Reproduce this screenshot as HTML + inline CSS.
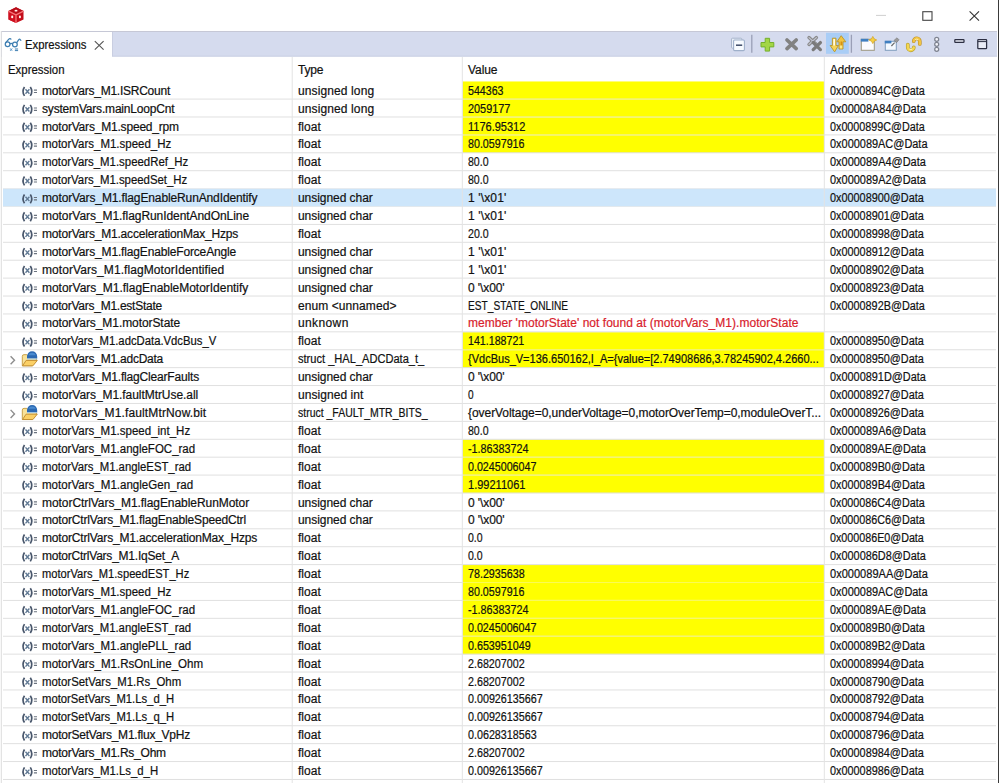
<!DOCTYPE html>
<html><head><meta charset="utf-8"><title>Expressions</title>
<style>
html,body{margin:0;padding:0;background:#fff;}
body{width:1000px;height:783px;position:relative;overflow:hidden;font-family:"Liberation Sans",sans-serif;font-size:12px;color:#111;}
.abs{position:absolute;}
.t{position:absolute;white-space:nowrap;line-height:18px;height:18px;-webkit-text-stroke:0.2px;transform-origin:0 0;}
.red{color:#d8222d;}
svg{position:absolute;left:0;top:0;overflow:visible;}
</style></head><body>

<svg width="1000" height="783" viewBox="0 0 1000 783">
<rect x="1" y="31" width="996" height="25.6" fill="#d5dbee"/>
<rect x="1" y="55.6" width="996" height="1" fill="#cbd1e3"/>
<rect x="1" y="31" width="996" height="1" fill="#c6c8d6"/>
<rect x="2" y="32" width="110.4" height="25" fill="#fff"/>
<rect x="112" y="32" width="1" height="24.6" fill="#c9cee1"/>
<rect x="826" y="32.8" width="22.8" height="21" fill="#a9cdf6"/>
<rect x="998" y="0" width="1" height="783" fill="#3a3a3a"/>
<rect x="0.8" y="31" width="1" height="752" fill="#dcdcdc"/>
<rect x="462.6" y="81.47" width="361.6" height="17.71" fill="#ffff00"/>
<rect x="462.6" y="99.38" width="361.6" height="17.71" fill="#ffff00"/>
<rect x="462.6" y="117.28" width="361.6" height="17.71" fill="#ffff00"/>
<rect x="462.6" y="135.19" width="361.6" height="17.71" fill="#ffff00"/>
<rect x="3" y="188.60" width="993" height="17.91" fill="#cde6fb"/>
<rect x="462.6" y="332.14" width="361.6" height="17.71" fill="#ffff00"/>
<rect x="462.6" y="350.05" width="361.6" height="17.71" fill="#ffff00"/>
<rect x="462.6" y="439.57" width="361.6" height="17.71" fill="#ffff00"/>
<rect x="462.6" y="457.48" width="361.6" height="17.71" fill="#ffff00"/>
<rect x="462.6" y="475.38" width="361.6" height="17.71" fill="#ffff00"/>
<rect x="462.6" y="564.90" width="361.6" height="17.71" fill="#ffff00"/>
<rect x="462.6" y="582.81" width="361.6" height="17.71" fill="#ffff00"/>
<rect x="462.6" y="600.71" width="361.6" height="17.71" fill="#ffff00"/>
<rect x="462.6" y="618.62" width="361.6" height="17.71" fill="#ffff00"/>
<rect x="462.6" y="636.52" width="361.6" height="17.71" fill="#ffff00"/>
<rect x="3" y="98.58" width="993" height="1" fill="#e0e0e0" fill-opacity="1"/>
<rect x="3" y="116.48" width="993" height="1" fill="#e0e0e0" fill-opacity="1"/>
<rect x="3" y="134.38" width="993" height="1" fill="#e0e0e0" fill-opacity="1"/>
<rect x="3" y="152.29" width="993" height="1" fill="#e0e0e0" fill-opacity="1"/>
<rect x="3" y="170.19" width="993" height="1" fill="#e0e0e0" fill-opacity="1"/>
<rect x="3" y="188.10" width="993" height="1" fill="#e0e0e0" fill-opacity="0.5"/>
<rect x="3" y="206.00" width="993" height="1" fill="#e0e0e0" fill-opacity="0.5"/>
<rect x="3" y="223.91" width="993" height="1" fill="#e0e0e0" fill-opacity="1"/>
<rect x="3" y="241.81" width="993" height="1" fill="#e0e0e0" fill-opacity="1"/>
<rect x="3" y="259.72" width="993" height="1" fill="#e0e0e0" fill-opacity="1"/>
<rect x="3" y="277.62" width="993" height="1" fill="#e0e0e0" fill-opacity="1"/>
<rect x="3" y="295.53" width="993" height="1" fill="#e0e0e0" fill-opacity="1"/>
<rect x="3" y="313.44" width="993" height="1" fill="#e0e0e0" fill-opacity="1"/>
<rect x="3" y="331.34" width="993" height="1" fill="#e0e0e0" fill-opacity="1"/>
<rect x="3" y="349.25" width="993" height="1" fill="#e0e0e0" fill-opacity="1"/>
<rect x="3" y="367.15" width="993" height="1" fill="#e0e0e0" fill-opacity="1"/>
<rect x="3" y="385.06" width="993" height="1" fill="#e0e0e0" fill-opacity="1"/>
<rect x="3" y="402.96" width="993" height="1" fill="#e0e0e0" fill-opacity="1"/>
<rect x="3" y="420.87" width="993" height="1" fill="#e0e0e0" fill-opacity="1"/>
<rect x="3" y="438.77" width="993" height="1" fill="#e0e0e0" fill-opacity="1"/>
<rect x="3" y="456.68" width="993" height="1" fill="#e0e0e0" fill-opacity="1"/>
<rect x="3" y="474.58" width="993" height="1" fill="#e0e0e0" fill-opacity="1"/>
<rect x="3" y="492.49" width="993" height="1" fill="#e0e0e0" fill-opacity="1"/>
<rect x="3" y="510.39" width="993" height="1" fill="#e0e0e0" fill-opacity="1"/>
<rect x="3" y="528.29" width="993" height="1" fill="#e0e0e0" fill-opacity="1"/>
<rect x="3" y="546.20" width="993" height="1" fill="#e0e0e0" fill-opacity="1"/>
<rect x="3" y="564.11" width="993" height="1" fill="#e0e0e0" fill-opacity="1"/>
<rect x="3" y="582.01" width="993" height="1" fill="#e0e0e0" fill-opacity="1"/>
<rect x="3" y="599.91" width="993" height="1" fill="#e0e0e0" fill-opacity="1"/>
<rect x="3" y="617.82" width="993" height="1" fill="#e0e0e0" fill-opacity="1"/>
<rect x="3" y="635.73" width="993" height="1" fill="#e0e0e0" fill-opacity="1"/>
<rect x="3" y="653.63" width="993" height="1" fill="#e0e0e0" fill-opacity="1"/>
<rect x="3" y="671.53" width="993" height="1" fill="#e0e0e0" fill-opacity="1"/>
<rect x="3" y="689.44" width="993" height="1" fill="#e0e0e0" fill-opacity="1"/>
<rect x="3" y="707.35" width="993" height="1" fill="#e0e0e0" fill-opacity="1"/>
<rect x="3" y="725.25" width="993" height="1" fill="#e0e0e0" fill-opacity="1"/>
<rect x="3" y="743.15" width="993" height="1" fill="#e0e0e0" fill-opacity="1"/>
<rect x="3" y="761.06" width="993" height="1" fill="#e0e0e0" fill-opacity="1"/>
<rect x="3" y="778.97" width="993" height="1" fill="#e0e0e0" fill-opacity="1"/>
<rect x="462.6" y="98.58" width="361.6" height="1" fill="#fafa55"/>
<rect x="462.6" y="116.48" width="361.6" height="1" fill="#fafa55"/>
<rect x="462.6" y="134.38" width="361.6" height="1" fill="#fafa55"/>
<rect x="462.6" y="349.25" width="361.6" height="1" fill="#fafa55"/>
<rect x="462.6" y="456.68" width="361.6" height="1" fill="#fafa55"/>
<rect x="462.6" y="474.58" width="361.6" height="1" fill="#fafa55"/>
<rect x="462.6" y="582.01" width="361.6" height="1" fill="#fafa55"/>
<rect x="462.6" y="599.91" width="361.6" height="1" fill="#fafa55"/>
<rect x="462.6" y="617.82" width="361.6" height="1" fill="#fafa55"/>
<rect x="462.6" y="635.73" width="361.6" height="1" fill="#fafa55"/>
<rect x="291.7" y="57" width="1" height="726" fill="#e3e3e3"/>
<rect x="461.8" y="57" width="1" height="726" fill="#e3e3e3"/>
<rect x="823.8" y="57" width="1" height="726" fill="#e3e3e3"/>
</svg>
<svg width="1000" height="783" viewBox="0 0 1000 783">
<defs>
<g id="vx"><path d="M3.5 0.8 Q0.5 5.2 3.5 9.7" fill="none" stroke="#48566b" stroke-width="1.7"/><path d="M9.3 0.8 Q12.3 5.2 9.3 9.7" fill="none" stroke="#48566b" stroke-width="1.7"/><path d="M4.5 3.1 L8.4 7.5 M8.4 3.1 L4.5 7.5" stroke="#5f7893" stroke-width="1.4" fill="none"/><path d="M12.9 3.9 h3.1 M12.9 6.3 h3.1" stroke="#6c7480" stroke-width="1.15"/></g>
<g id="st"><path d="M1.6 1.4 l3.9 4.1 l-3.9 4.1" fill="none" stroke="#8e8e8e" stroke-width="1.4"/>
<path d="M13.3 1.6 q0 -1.7 1.7 -1.7 h2.8 l1.2 1.5 h8.4 v4.4 l-4.3 5.2 h-9.8z" fill="#f8e29a" stroke="#c49a3c" stroke-width="0.9"/>
<path d="M13.5 11.1 l3.6 -5.4 h11.2 l-4.4 5.4z" fill="#fbd066" stroke="#bf8a2e" stroke-width="0.9" stroke-linejoin="round"/>
<path d="M18 3.7 v-2 a5.1 5.1 0 0 1 10.2 0 v2z" fill="#2b69b3"/><path d="M19.4 0.4 a3.9 3.4 0 0 1 7.4 0z" fill="#4f90d4" fill-opacity="0.85"/><rect x="18" y="3.7" width="10.2" height="1" fill="#9cc8ee"/></g>
</defs>
<g>
<path d="M16 7.2 L23.5 11.1 L23.5 19.4 L16 22.9 L8.5 19.4 L8.5 11.1Z" fill="#c40d1a"/>
<path d="M16 7.2 L23.5 11.1 L16 14.9 L8.5 11.1Z" fill="#b80c18"/>
<path d="M8.5 11.1 L16 14.9 L16 22.9 L8.5 19.4Z" fill="#d01020"/>
<path d="M16 14.9 L8.5 11.1 M16 14.9 L23.5 11.1 M16 14.9 L16 22.9" stroke="#f77478" stroke-width="1.3" fill="none"/>
<ellipse cx="16" cy="10.7" rx="1.5" ry="0.85" fill="#fff4f0"/>
<ellipse cx="12.2" cy="16.9" rx="1.05" ry="1.35" fill="#fff4f0"/>
<ellipse cx="19.9" cy="16.9" rx="1.05" ry="1.35" fill="#fff4f0"/>
</g>
<path d="M876 15.4 h10" stroke="#cfcfcf" stroke-width="1"/>
<rect x="922.8" y="11.7" width="9.2" height="8.6" fill="none" stroke="#444" stroke-width="1.1"/>
<path d="M969.6 11.4 l9.4 9.2 M979 11.4 l-9.4 9.2" stroke="#333" stroke-width="1.1" fill="none"/>
<g fill="none" stroke="#3f7fb2" stroke-width="1.25">
<circle cx="7.6" cy="44.2" r="2.35"/><circle cx="14.9" cy="44.5" r="2.35"/>
<path d="M9.9 43.9 q1.3 -0.9 2.7 0.1"/>
<path d="M5.6 42.9 L8.6 39.3 q1.4 -1.6 2.7 0.2"/>
<path d="M16.6 42.8 L18.6 40 q1.5 -1.9 2.4 0.9"/>
</g>
<path d="M10.2 48.4 l2 2.4 M12.2 48.4 l-2 2.4" stroke="#4a8dc4" stroke-width="0.9" fill="none"/>
<path d="M14.9 49 h3.2 M14.9 50.6 h3.2" stroke="#3f7fb2" stroke-width="1"/>
<path d="M94.8 41.2 l8.8 8.4 M103.6 41.2 l-8.8 8.4" stroke="#565656" stroke-width="1.15" fill="none"/>
<rect x="731.5" y="38.2" width="10.4" height="10" rx="1" fill="#e8eef7" stroke="#a9b6cc" stroke-width="1"/>
<rect x="733.6" y="40" width="10.8" height="10.6" rx="1" fill="#f7fbff" stroke="#9fb0ca" stroke-width="1.1"/>
<path d="M736 45.2 h6.2" stroke="#3d4a68" stroke-width="1.5"/>
<path d="M751.8 34.8 v18 M851.4 34.8 v18" stroke="#9a9fb6" stroke-width="1.3"/>
<path d="M765.2 38.3 h4.4 v4.2 h4.2 v4.4 h-4.2 v4.2 h-4.4 v-4.2 h-4.2 v-4.4 h4.2z" fill="#a3d646" stroke="#74b02c" stroke-width="1" stroke-linejoin="round"/>
<path d="M787 40 l9.2 8.6 M796.2 40 l-9.2 8.6" stroke="#828282" stroke-width="3.7" stroke-linecap="round" fill="none"/>
<path d="M809 37.6 l7.4 6.8 M816.4 37.6 l-7.4 6.8" stroke="#8a8a8a" stroke-width="3.4" stroke-linecap="round" fill="none"/>
<path d="M809 37.6 l7.4 6.8 M816.4 37.6 l-7.4 6.8" stroke="#c3c6d2" stroke-width="1.2" stroke-linecap="round" fill="none"/>
<path d="M813.2 42.6 l7.2 7 M820.4 42.6 l-7.2 7" stroke="#7a7a7a" stroke-width="3.3" stroke-linecap="round" fill="none"/>
<g stroke="#b9952a" stroke-width="0.9" stroke-linejoin="round">
<path d="M832.4 38.2 h3.6 v7.3 h2.4 l-3.8 6.4 l-4.4 -6.4 h2.2z" fill="#f6d458"/>
<path d="M839 49 h4 v-7.2 h2.8 l-4.6 -6.1 l-4.3 6.1 h2.1z" fill="#f2c440"/>
</g><path d="M833.3 38.9 h1.7 v6.6 h-1.7z" fill="#fffbe6"/><path d="M840.6 41.5 h1.6 v4 h-1.6z" fill="#d8900f"/><path d="M839.8 45.6 h2.4 v2.8 h-2.4z" fill="#fbe98a"/>
<rect x="861.3" y="39.3" width="13" height="11" fill="#fbfcff" stroke="#9b9680" stroke-width="1"/>
<rect x="860.8" y="38.8" width="7.6" height="2.8" fill="#3f7fc1"/>
<path d="M872.8 36.4 l1.3 2.4 l2.6 1.2 l-2.6 1.2 l-1.3 2.4 l-1.3 -2.4 l-2.6 -1.2 l2.6 -1.2z" fill="#f5cf45" stroke="#d2a21e" stroke-width="0.7"/>
<rect x="885.3" y="41.3" width="11" height="9" fill="#f4f9ff" stroke="#7f9dbd" stroke-width="1"/>
<rect x="884.8" y="40.8" width="6.6" height="2.6" fill="#3f7fc1"/>
<path d="M891.4 46 l3.2 -3.4" stroke="#6b6b6b" stroke-width="1.2"/>
<path d="M894 40.4 l3 -2.6 l2 2 l-2.6 3z" fill="#9a9a9a" stroke="#777" stroke-width="0.6"/>
<g fill="none" stroke-linecap="round" stroke-linejoin="round">
<path d="M913.8 41.2 a3 3 0 0 1 6 0.2 v2.6" stroke="#bf932a" stroke-width="3.7"/>
<path d="M913.8 41.2 a3 3 0 0 1 6 0.2 v2.6" stroke="#f2c544" stroke-width="2.4"/>
<path d="M913.8 47.4 a3 3 0 0 1 -6 -0.2 v-2.6" stroke="#b7a030" stroke-width="3.7"/>
<path d="M913.8 47.4 a3 3 0 0 1 -6 -0.2 v-2.6" stroke="#f4d650" stroke-width="2.4"/>
<path d="M915.6 39.4 q1.3 -0.8 2.4 0" stroke="#fff3b8" stroke-width="1"/>
<path d="M909.6 49.2 q1.3 0.8 2.4 0" stroke="#fff6c8" stroke-width="1"/>
</g>
<circle cx="936.7" cy="39.3" r="2.0" fill="#f3f4fa" stroke="#7f8491" stroke-width="1.25"/>
<circle cx="936.7" cy="44.3" r="2.0" fill="#f3f4fa" stroke="#7f8491" stroke-width="1.25"/>
<circle cx="936.7" cy="49.3" r="2.0" fill="#f3f4fa" stroke="#7f8491" stroke-width="1.25"/>
<rect x="954.8" y="39.6" width="9.2" height="2.8" rx="0.6" fill="#e9ecf6" stroke="#2c2f42" stroke-width="1.25"/>
<rect x="977.8" y="39.6" width="8.8" height="9" rx="0.6" fill="#e9ecf6" stroke="#2c2f42" stroke-width="1.25"/><path d="M977.8 41.6 h8.8" stroke="#2c2f42" stroke-width="1"/>
<use href="#vx" x="21" y="86.17"/>
<use href="#vx" x="21" y="104.08"/>
<use href="#vx" x="21" y="121.98"/>
<use href="#vx" x="21" y="139.88"/>
<use href="#vx" x="21" y="157.79"/>
<use href="#vx" x="21" y="175.69"/>
<use href="#vx" x="21" y="193.60"/>
<use href="#vx" x="21" y="211.50"/>
<use href="#vx" x="21" y="229.41"/>
<use href="#vx" x="21" y="247.31"/>
<use href="#vx" x="21" y="265.22"/>
<use href="#vx" x="21" y="283.12"/>
<use href="#vx" x="21" y="301.03"/>
<use href="#vx" x="21" y="318.94"/>
<use href="#vx" x="21" y="336.84"/>
<use href="#st" x="9" y="354.75"/>
<use href="#vx" x="21" y="372.65"/>
<use href="#vx" x="21" y="390.56"/>
<use href="#st" x="9" y="408.46"/>
<use href="#vx" x="21" y="426.37"/>
<use href="#vx" x="21" y="444.27"/>
<use href="#vx" x="21" y="462.18"/>
<use href="#vx" x="21" y="480.08"/>
<use href="#vx" x="21" y="497.99"/>
<use href="#vx" x="21" y="515.89"/>
<use href="#vx" x="21" y="533.79"/>
<use href="#vx" x="21" y="551.70"/>
<use href="#vx" x="21" y="569.61"/>
<use href="#vx" x="21" y="587.51"/>
<use href="#vx" x="21" y="605.41"/>
<use href="#vx" x="21" y="623.32"/>
<use href="#vx" x="21" y="641.23"/>
<use href="#vx" x="21" y="659.13"/>
<use href="#vx" x="21" y="677.03"/>
<use href="#vx" x="21" y="694.94"/>
<use href="#vx" x="21" y="712.85"/>
<use href="#vx" x="21" y="730.75"/>
<use href="#vx" x="21" y="748.65"/>
<use href="#vx" x="21" y="766.56"/>
</svg>
<div class="t" style="left:25px;top:36px;transform:scaleX(0.9407)">Expressions</div>
<div class="t" style="left:8px;top:61px;transform:scaleX(0.9516)">Expression</div>
<div class="t" style="left:298px;top:61px;letter-spacing:-0.172px">Type</div>
<div class="t" style="left:468px;top:61px;letter-spacing:-0.078px">Value</div>
<div class="t" style="left:830px;top:61px;transform:scaleX(0.9652)">Address</div>
<div class="t" style="left:42px;top:82px;letter-spacing:-0.246px">motorVars_M1.ISRCount</div>
<div class="t" style="left:298px;top:82px;letter-spacing:0.114px">unsigned long</div>
<div class="t" style="left:468px;top:82px;transform:scaleX(0.8852)">544363</div>
<div class="t" style="left:830px;top:82px;transform:scaleX(0.8980)">0x0000894C@Data</div>
<div class="t" style="left:42px;top:100px;letter-spacing:-0.186px">systemVars.mainLoopCnt</div>
<div class="t" style="left:298px;top:100px;letter-spacing:0.114px">unsigned long</div>
<div class="t" style="left:468px;top:100px;transform:scaleX(0.9076)">2059177</div>
<div class="t" style="left:830px;top:100px;transform:scaleX(0.9131)">0x00008A84@Data</div>
<div class="t" style="left:42px;top:118px;letter-spacing:-0.194px">motorVars_M1.speed_rpm</div>
<div class="t" style="left:298px;top:118px;letter-spacing:0.033px">float</div>
<div class="t" style="left:468px;top:118px;transform:scaleX(0.9166)">1176.95312</div>
<div class="t" style="left:830px;top:118px;transform:scaleX(0.8980)">0x0000899C@Data</div>
<div class="t" style="left:42px;top:135px;transform:scaleX(0.9558)">motorVars_M1.speed_Hz</div>
<div class="t" style="left:298px;top:135px;letter-spacing:0.033px">float</div>
<div class="t" style="left:468px;top:135px;transform:scaleX(0.8911)">80.0597916</div>
<div class="t" style="left:830px;top:135px;transform:scaleX(0.9119)">0x000089AC@Data</div>
<div class="t" style="left:42px;top:153px;transform:scaleX(0.9503)">motorVars_M1.speedRef_Hz</div>
<div class="t" style="left:298px;top:153px;letter-spacing:0.033px">float</div>
<div class="t" style="left:468px;top:153px;transform:scaleX(0.8797)">80.0</div>
<div class="t" style="left:830px;top:153px;transform:scaleX(0.9131)">0x000089A4@Data</div>
<div class="t" style="left:42px;top:171px;transform:scaleX(0.9482)">motorVars_M1.speedSet_Hz</div>
<div class="t" style="left:298px;top:171px;letter-spacing:0.033px">float</div>
<div class="t" style="left:468px;top:171px;transform:scaleX(0.8797)">80.0</div>
<div class="t" style="left:830px;top:171px;transform:scaleX(0.9131)">0x000089A2@Data</div>
<div class="t" style="left:42px;top:189px;letter-spacing:-0.122px">motorVars_M1.flagEnableRunAndIdentify</div>
<div class="t" style="left:298px;top:189px;letter-spacing:-0.049px">unsigned char</div>
<div class="t" style="left:468px;top:189px;letter-spacing:0.146px">1 '\x01'</div>
<div class="t" style="left:830px;top:189px;transform:scaleX(0.9057)">0x00008900@Data</div>
<div class="t" style="left:42px;top:207px;letter-spacing:-0.065px">motorVars_M1.flagRunIdentAndOnLine</div>
<div class="t" style="left:298px;top:207px;letter-spacing:-0.049px">unsigned char</div>
<div class="t" style="left:468px;top:207px;letter-spacing:0.146px">1 '\x01'</div>
<div class="t" style="left:830px;top:207px;transform:scaleX(0.9057)">0x00008901@Data</div>
<div class="t" style="left:42px;top:225px;letter-spacing:-0.195px">motorVars_M1.accelerationMax_Hzps</div>
<div class="t" style="left:298px;top:225px;letter-spacing:0.033px">float</div>
<div class="t" style="left:468px;top:225px;transform:scaleX(0.8827)">20.0</div>
<div class="t" style="left:830px;top:225px;transform:scaleX(0.9057)">0x00008998@Data</div>
<div class="t" style="left:42px;top:243px;letter-spacing:-0.157px">motorVars_M1.flagEnableForceAngle</div>
<div class="t" style="left:298px;top:243px;letter-spacing:-0.049px">unsigned char</div>
<div class="t" style="left:468px;top:243px;letter-spacing:0.146px">1 '\x01'</div>
<div class="t" style="left:830px;top:243px;transform:scaleX(0.9057)">0x00008912@Data</div>
<div class="t" style="left:42px;top:261px;letter-spacing:0.072px">motorVars_M1.flagMotorIdentified</div>
<div class="t" style="left:298px;top:261px;letter-spacing:-0.049px">unsigned char</div>
<div class="t" style="left:468px;top:261px;letter-spacing:0.146px">1 '\x01'</div>
<div class="t" style="left:830px;top:261px;transform:scaleX(0.9057)">0x00008902@Data</div>
<div class="t" style="left:42px;top:279px;letter-spacing:-0.026px">motorVars_M1.flagEnableMotorIdentify</div>
<div class="t" style="left:298px;top:279px;letter-spacing:-0.049px">unsigned char</div>
<div class="t" style="left:468px;top:279px;letter-spacing:-0.094px">0 '\x00'</div>
<div class="t" style="left:830px;top:279px;transform:scaleX(0.9057)">0x00008923@Data</div>
<div class="t" style="left:42px;top:297px;letter-spacing:-0.246px">motorVars_M1.estState</div>
<div class="t" style="left:298px;top:297px;letter-spacing:0.076px">enum &lt;unnamed&gt;</div>
<div class="t" style="left:468px;top:297px;transform:scaleX(0.8468)">EST_STATE_ONLINE</div>
<div class="t" style="left:830px;top:297px;transform:scaleX(0.9036)">0x0000892B@Data</div>
<div class="t" style="left:42px;top:314px;letter-spacing:-0.076px">motorVars_M1.motorState</div>
<div class="t" style="left:298px;top:314px;letter-spacing:0.379px">unknown</div>
<div class="t red" style="left:468px;top:314px;letter-spacing:0.034px">member 'motorState' not found at (motorVars_M1).motorState</div>
<div class="t" style="left:42px;top:332px;transform:scaleX(0.9411)">motorVars_M1.adcData.VdcBus_V</div>
<div class="t" style="left:298px;top:332px;letter-spacing:0.033px">float</div>
<div class="t" style="left:468px;top:332px;transform:scaleX(0.8879)">141.188721</div>
<div class="t" style="left:830px;top:332px;transform:scaleX(0.9057)">0x00008950@Data</div>
<div class="t" style="left:42px;top:350px;letter-spacing:-0.239px">motorVars_M1.adcData</div>
<div class="t" style="left:298px;top:350px;transform:scaleX(0.9234)">struct _HAL_ADCData_t_</div>
<div class="t" style="left:468px;top:350px;transform:scaleX(0.9181)">{VdcBus_V=136.650162,I_A={value=[2.74908686,3.78245902,4.2660...</div>
<div class="t" style="left:830px;top:350px;transform:scaleX(0.9057)">0x00008950@Data</div>
<div class="t" style="left:42px;top:368px;letter-spacing:-0.172px">motorVars_M1.flagClearFaults</div>
<div class="t" style="left:298px;top:368px;letter-spacing:-0.049px">unsigned char</div>
<div class="t" style="left:468px;top:368px;letter-spacing:-0.094px">0 '\x00'</div>
<div class="t" style="left:830px;top:368px;transform:scaleX(0.9074)">0x0000891D@Data</div>
<div class="t" style="left:42px;top:386px;letter-spacing:-0.062px">motorVars_M1.faultMtrUse.all</div>
<div class="t" style="left:298px;top:386px;letter-spacing:0.057px">unsigned int</div>
<div class="t" style="left:468px;top:386px;transform:scaleX(0.8404)">0</div>
<div class="t" style="left:830px;top:386px;transform:scaleX(0.9057)">0x00008927@Data</div>
<div class="t" style="left:42px;top:404px;letter-spacing:0.137px">motorVars_M1.faultMtrNow.bit</div>
<div class="t" style="left:298px;top:404px;transform:scaleX(0.8728)">struct _FAULT_MTR_BITS_</div>
<div class="t" style="left:468px;top:404px;letter-spacing:-0.057px">{overVoltage=0,underVoltage=0,motorOverTemp=0,moduleOverT...</div>
<div class="t" style="left:830px;top:404px;transform:scaleX(0.9057)">0x00008926@Data</div>
<div class="t" style="left:42px;top:422px;transform:scaleX(0.9590)">motorVars_M1.speed_int_Hz</div>
<div class="t" style="left:298px;top:422px;letter-spacing:0.033px">float</div>
<div class="t" style="left:468px;top:422px;transform:scaleX(0.8797)">80.0</div>
<div class="t" style="left:830px;top:422px;transform:scaleX(0.9131)">0x000089A6@Data</div>
<div class="t" style="left:42px;top:440px;transform:scaleX(0.9581)">motorVars_M1.angleFOC_rad</div>
<div class="t" style="left:298px;top:440px;letter-spacing:0.033px">float</div>
<div class="t" style="left:468px;top:440px;transform:scaleX(0.8990)">-1.86383724</div>
<div class="t" style="left:830px;top:440px;transform:scaleX(0.9017)">0x000089AE@Data</div>
<div class="t" style="left:42px;top:458px;transform:scaleX(0.9442)">motorVars_M1.angleEST_rad</div>
<div class="t" style="left:298px;top:458px;letter-spacing:0.033px">float</div>
<div class="t" style="left:468px;top:458px;transform:scaleX(0.8912)">0.0245006047</div>
<div class="t" style="left:830px;top:458px;transform:scaleX(0.9036)">0x000089B0@Data</div>
<div class="t" style="left:42px;top:476px;transform:scaleX(0.9618)">motorVars_M1.angleGen_rad</div>
<div class="t" style="left:298px;top:476px;letter-spacing:0.033px">float</div>
<div class="t" style="left:468px;top:476px;transform:scaleX(0.9185)">1.99211061</div>
<div class="t" style="left:830px;top:476px;transform:scaleX(0.9036)">0x000089B4@Data</div>
<div class="t" style="left:42px;top:494px;letter-spacing:-0.059px">motorCtrlVars_M1.flagEnableRunMotor</div>
<div class="t" style="left:298px;top:494px;letter-spacing:-0.049px">unsigned char</div>
<div class="t" style="left:468px;top:494px;letter-spacing:-0.094px">0 '\x00'</div>
<div class="t" style="left:830px;top:494px;transform:scaleX(0.8980)">0x000086C4@Data</div>
<div class="t" style="left:42px;top:511px;letter-spacing:-0.165px">motorCtrlVars_M1.flagEnableSpeedCtrl</div>
<div class="t" style="left:298px;top:511px;letter-spacing:-0.049px">unsigned char</div>
<div class="t" style="left:468px;top:511px;letter-spacing:-0.094px">0 '\x00'</div>
<div class="t" style="left:830px;top:511px;transform:scaleX(0.8980)">0x000086C6@Data</div>
<div class="t" style="left:42px;top:529px;letter-spacing:-0.165px">motorCtrlVars_M1.accelerationMax_Hzps</div>
<div class="t" style="left:298px;top:529px;letter-spacing:0.033px">float</div>
<div class="t" style="left:468px;top:529px;transform:scaleX(0.8761)">0.0</div>
<div class="t" style="left:830px;top:529px;transform:scaleX(0.8941)">0x000086E0@Data</div>
<div class="t" style="left:42px;top:547px;letter-spacing:-0.230px">motorCtrlVars_M1.IqSet_A</div>
<div class="t" style="left:298px;top:547px;letter-spacing:0.033px">float</div>
<div class="t" style="left:468px;top:547px;transform:scaleX(0.8761)">0.0</div>
<div class="t" style="left:830px;top:547px;transform:scaleX(0.9074)">0x000086D8@Data</div>
<div class="t" style="left:42px;top:565px;transform:scaleX(0.9289)">motorVars_M1.speedEST_Hz</div>
<div class="t" style="left:298px;top:565px;letter-spacing:0.033px">float</div>
<div class="t" style="left:468px;top:565px;transform:scaleX(0.8930)">78.2935638</div>
<div class="t" style="left:830px;top:565px;transform:scaleX(0.9205)">0x000089AA@Data</div>
<div class="t" style="left:42px;top:583px;transform:scaleX(0.9558)">motorVars_M1.speed_Hz</div>
<div class="t" style="left:298px;top:583px;letter-spacing:0.033px">float</div>
<div class="t" style="left:468px;top:583px;transform:scaleX(0.8911)">80.0597916</div>
<div class="t" style="left:830px;top:583px;transform:scaleX(0.9119)">0x000089AC@Data</div>
<div class="t" style="left:42px;top:601px;transform:scaleX(0.9581)">motorVars_M1.angleFOC_rad</div>
<div class="t" style="left:298px;top:601px;letter-spacing:0.033px">float</div>
<div class="t" style="left:468px;top:601px;transform:scaleX(0.8990)">-1.86383724</div>
<div class="t" style="left:830px;top:601px;transform:scaleX(0.9017)">0x000089AE@Data</div>
<div class="t" style="left:42px;top:619px;transform:scaleX(0.9442)">motorVars_M1.angleEST_rad</div>
<div class="t" style="left:298px;top:619px;letter-spacing:0.033px">float</div>
<div class="t" style="left:468px;top:619px;transform:scaleX(0.8912)">0.0245006047</div>
<div class="t" style="left:830px;top:619px;transform:scaleX(0.9036)">0x000089B0@Data</div>
<div class="t" style="left:42px;top:637px;transform:scaleX(0.9572)">motorVars_M1.anglePLL_rad</div>
<div class="t" style="left:298px;top:637px;letter-spacing:0.033px">float</div>
<div class="t" style="left:468px;top:637px;transform:scaleX(0.8936)">0.653951049</div>
<div class="t" style="left:830px;top:637px;transform:scaleX(0.9036)">0x000089B2@Data</div>
<div class="t" style="left:42px;top:655px;transform:scaleX(0.9639)">motorVars_M1.RsOnLine_Ohm</div>
<div class="t" style="left:298px;top:655px;letter-spacing:0.033px">float</div>
<div class="t" style="left:468px;top:655px;transform:scaleX(0.8930)">2.68207002</div>
<div class="t" style="left:830px;top:655px;transform:scaleX(0.9057)">0x00008994@Data</div>
<div class="t" style="left:42px;top:673px;transform:scaleX(0.9502)">motorSetVars_M1.Rs_Ohm</div>
<div class="t" style="left:298px;top:673px;letter-spacing:0.033px">float</div>
<div class="t" style="left:468px;top:673px;transform:scaleX(0.8930)">2.68207002</div>
<div class="t" style="left:830px;top:673px;transform:scaleX(0.9057)">0x00008790@Data</div>
<div class="t" style="left:42px;top:690px;transform:scaleX(0.9401)">motorSetVars_M1.Ls_d_H</div>
<div class="t" style="left:298px;top:690px;letter-spacing:0.033px">float</div>
<div class="t" style="left:468px;top:690px;transform:scaleX(0.8945)">0.00926135667</div>
<div class="t" style="left:830px;top:690px;transform:scaleX(0.9057)">0x00008792@Data</div>
<div class="t" style="left:42px;top:708px;transform:scaleX(0.9401)">motorSetVars_M1.Ls_q_H</div>
<div class="t" style="left:298px;top:708px;letter-spacing:0.033px">float</div>
<div class="t" style="left:468px;top:708px;transform:scaleX(0.8945)">0.00926135667</div>
<div class="t" style="left:830px;top:708px;transform:scaleX(0.9057)">0x00008794@Data</div>
<div class="t" style="left:42px;top:726px;letter-spacing:-0.233px">motorSetVars_M1.flux_VpHz</div>
<div class="t" style="left:298px;top:726px;letter-spacing:0.033px">float</div>
<div class="t" style="left:468px;top:726px;transform:scaleX(0.8941)">0.0628318563</div>
<div class="t" style="left:830px;top:726px;transform:scaleX(0.9057)">0x00008796@Data</div>
<div class="t" style="left:42px;top:744px;letter-spacing:-0.246px">motorVars_M1.Rs_Ohm</div>
<div class="t" style="left:298px;top:744px;letter-spacing:0.033px">float</div>
<div class="t" style="left:468px;top:744px;transform:scaleX(0.8930)">2.68207002</div>
<div class="t" style="left:830px;top:744px;transform:scaleX(0.9057)">0x00008984@Data</div>
<div class="t" style="left:42px;top:762px;transform:scaleX(0.9482)">motorVars_M1.Ls_d_H</div>
<div class="t" style="left:298px;top:762px;letter-spacing:0.033px">float</div>
<div class="t" style="left:468px;top:762px;transform:scaleX(0.8945)">0.00926135667</div>
<div class="t" style="left:830px;top:762px;transform:scaleX(0.9057)">0x00008986@Data</div>
</body></html>
